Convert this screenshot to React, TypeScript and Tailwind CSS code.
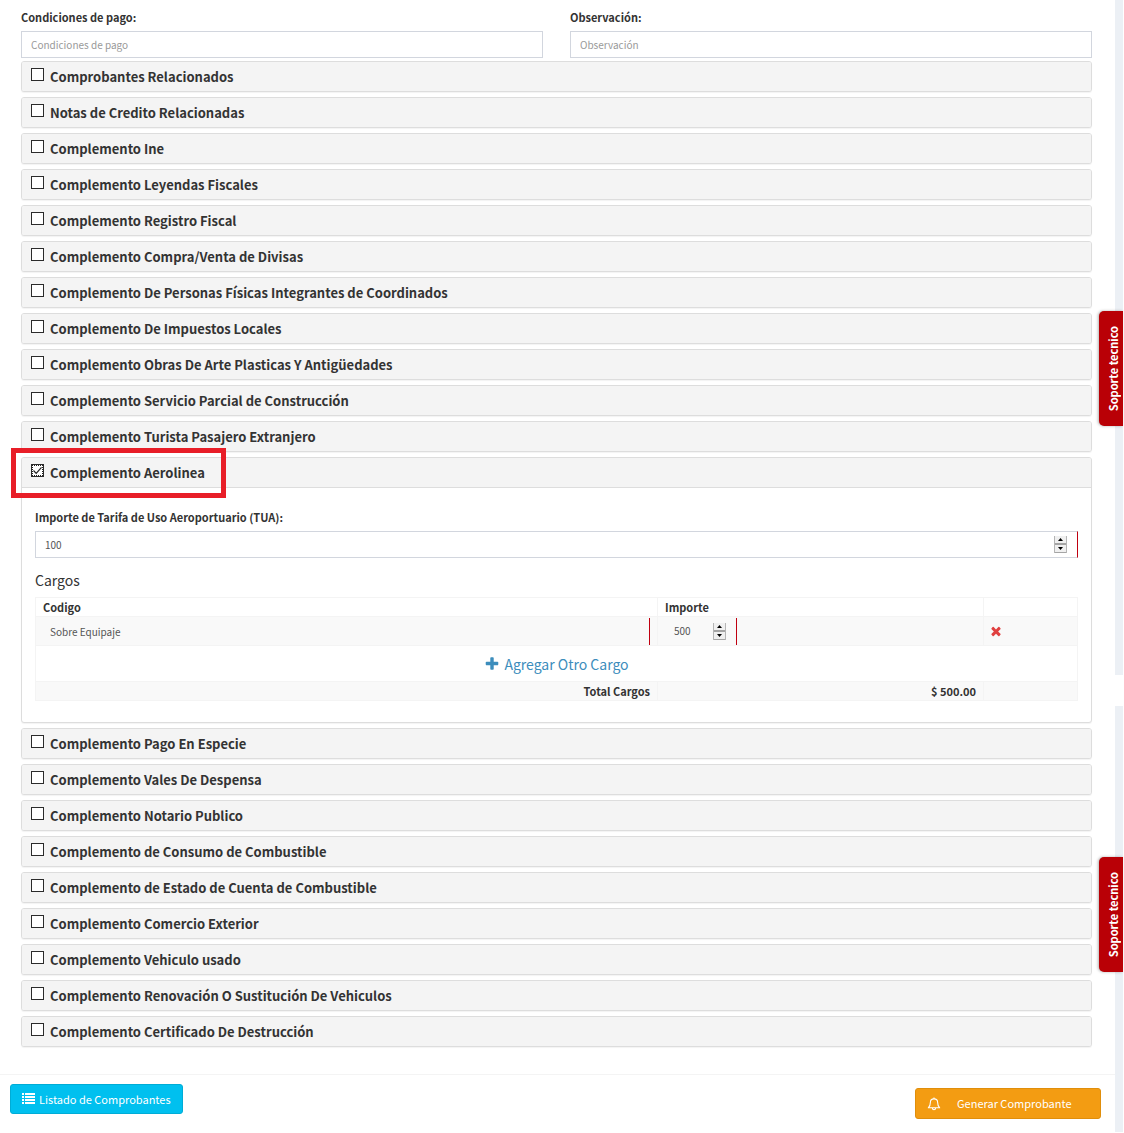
import React, { useState } from 'react';

interface Complemento {
  id: string;
  title: string;
}

const BEFORE: Complemento[] = [
  { id: 'comprobantes', title: 'Comprobantes Relacionados' },
  { id: 'notas', title: 'Notas de Credito Relacionadas' },
  { id: 'ine', title: 'Complemento Ine' },
  { id: 'leyendas', title: 'Complemento Leyendas Fiscales' },
  { id: 'registro', title: 'Complemento Registro Fiscal' },
  { id: 'divisas', title: 'Complemento Compra/Venta de Divisas' },
  { id: 'coordinados', title: 'Complemento De Personas Físicas Integrantes de Coordinados' },
  { id: 'impuestos', title: 'Complemento De Impuestos Locales' },
  { id: 'arte', title: 'Complemento Obras De Arte Plasticas Y Antigüedades' },
  { id: 'construccion', title: 'Complemento Servicio Parcial de Construcción' },
  { id: 'turista', title: 'Complemento Turista Pasajero Extranjero' },
];

const AFTER: Complemento[] = [
  { id: 'especie', title: 'Complemento Pago En Especie' },
  { id: 'vales', title: 'Complemento Vales De Despensa' },
  { id: 'notario', title: 'Complemento Notario Publico' },
  { id: 'consumo', title: 'Complemento de Consumo de Combustible' },
  { id: 'estado', title: 'Complemento de Estado de Cuenta de Combustible' },
  { id: 'comercio', title: 'Complemento Comercio Exterior' },
  { id: 'vehiculo', title: 'Complemento Vehiculo usado' },
  { id: 'renovacion', title: 'Complemento Renovación O Sustitución De Vehiculos' },
  { id: 'destruccion', title: 'Complemento Certificado De Destrucción' },
];

// Icons
const PlusIcon = () => (
  <svg viewBox="0 0 1792 1792" className="h-4 w-4" fill="currentColor">
    <path d="M1600 736v192q0 40-28 68t-68 28h-416v416q0 40-28 68t-68 28h-192q-40 0-68-28t-28-68v-416h-416q-40 0-68-28t-28-68v-192q0-40 28-68t68-28h416v-416q0-40 28-68t68-28h192q40 0 68 28t28 68v416h416q40 0 68 28t28 68z" />
  </svg>
);

const TimesIcon = () => (
  <svg viewBox="0 0 1792 1792" className="h-[14px] w-[14px]" fill="currentColor">
    <path d="M1490 1322q0 40-28 68l-136 136q-28 28-68 28t-68-28l-294-294-294 294q-28 28-68 28t-68-28l-136-136q-28-28-28-68t28-68l294-294-294-294q-28-28-28-68t28-68l136-136q28-28 68-28t68 28l294 294 294-294q28-28 68-28t68 28l136 136q28 28 28 68t-28 68l-294 294 294 294q28 28 28 68z" />
  </svg>
);

const ListIcon = () => (
  <svg viewBox="0 0 13 12" className="h-3 w-[13px]" fill="currentColor">
    <path d="M0 0h2v2H0zM3 0h10v2H3zM0 3h2v2H0zM3 3h10v2H3zM0 6h2v2H0zM3 6h10v2H3zM0 9h2v2H0zM3 9h10v2H3z" />
  </svg>
);

const BellIcon = () => (
  <svg viewBox="0 0 14 14" className="h-[14px] w-[14px]" fill="none" stroke="currentColor" strokeWidth="1.1">
    <path d="M1.3 10.8C3 9.2 3.4 7.6 3.4 5.2c0-2 1.4-3.3 3.6-3.3s3.6 1.3 3.6 3.3c0 2.4.4 4 2.1 5.6z" strokeLinejoin="round" />
    <path d="M7 .6v1.3M5.4 11c0 1 .7 1.7 1.6 1.7s1.6-.7 1.6-1.7" />
  </svg>
);

interface PanelProps {
  id: string;
  title: string;
  checked?: boolean;
  onToggle?: () => void;
  highlight?: boolean;
  children?: React.ReactNode;
}

const Panel: React.FC<PanelProps> = ({ id, title, checked, onToggle, highlight, children }) => (
  <section className="relative rounded-[3px] border border-[#dddddd] bg-white shadow-[0_1px_1px_rgba(0,0,0,0.05)]">
    <div className={`flex h-[29px] items-start rounded-t-[2px] bg-[#f4f4f4] px-[9px] ${children ? 'box-content border-b border-[#dddddd]' : 'rounded-b-[2px]'}`}>
      <span className="relative mt-[6px] block h-[13px] w-[13px]">
        <input
          id={id}
          type="checkbox"
          checked={checked}
          onChange={onToggle}
          className="peer block h-[13px] w-[13px] appearance-none border border-[#2b2b2b] bg-white checked:outline-1 checked:-outline-offset-2 checked:outline-dotted checked:outline-[#222222]"
        />
        <svg viewBox="0 0 13 13" className="pointer-events-none absolute inset-0 hidden h-[13px] w-[13px] peer-checked:block">
          <path d="M2.5 6.5l2.7 2.8 5.3-6" fill="none" stroke="#222" strokeWidth="1.2" />
        </svg>
      </span>
      <label htmlFor={id} className="pl-[6px] text-[13px] leading-[29px] font-bold">{title}</label>
    </div>
    {children}
    {highlight && <div className="pointer-events-none absolute -top-[10px] -left-[11px] h-[50px] w-[215px] border-5 border-[#e81e28]" />}
  </section>
);

const Spinner = ({ onStep }: { onStep: (n: number) => void }) => (
  <span className="flex h-[17px] w-[13px] shrink-0 flex-col border-x border-[#b5b5b5] bg-[#f0f0f0]">
    <button type="button" aria-label="Aumentar" onClick={() => onStep(1)} className="flex h-2 w-full items-center justify-center border-b border-[#a5a5a5]">
      <svg viewBox="0 0 5 3" className="h-[3px] w-[5px]"><path d="M0 3L2.5 0 5 3z" /></svg>
    </button>
    <button type="button" aria-label="Disminuir" onClick={() => onStep(-1)} className="flex h-[9px] w-full items-center justify-center border-y border-[#a5a5a5]">
      <svg viewBox="0 0 5 3" className="h-[3px] w-[5px]"><path d="M0 0L2.5 3 5 0z" /></svg>
    </button>
  </span>
);

const SupportTab = ({ className }: { className: string }) => (
  <button type="button" className={`absolute right-px flex h-[115px] w-6 items-center justify-center rounded-l-[5px] bg-[#b90006] pl-1 text-white shadow-[-1px_0_3px_rgba(0,0,0,0.3)] ${className}`}>
    <span className="rotate-180 text-[11px] leading-[16px] font-bold [writing-mode:vertical-rl]">Soporte tecnico</span>
  </button>
);

const fieldLabel = 'mb-1 block text-[11px] leading-[19px] font-bold';
const inputBox = 'block h-[27px] w-full border border-[#d2d6de] bg-white px-[9px] text-[10px] leading-[25px] text-[#555555] placeholder:text-[#999999] outline-none';
const numberReset = 'min-w-0 bg-transparent text-[10px] text-[#555555] outline-none [appearance:textfield]';

export default function App() {
  const [selected, setSelected] = useState<Record<string, boolean>>({ aerolinea: true });
  const [tua, setTua] = useState(100);
  const [importe, setImporte] = useState(500);
  const [codigo, setCodigo] = useState('Sobre Equipaje');

  const toggle = (id: string) => setSelected(prev => ({ ...prev, [id]: !prev[id] }));

  const renderPanel = (c: Complemento) => (
    <Panel key={c.id} id={c.id} title={c.title} checked={!!selected[c.id]} onToggle={() => toggle(c.id)} />
  );

  return (
    <div className="relative flex min-h-screen bg-white pr-px font-['Noto_Sans_CJK_SC','Noto_Sans',sans-serif] text-[#333333]">
      <main className="min-w-0 flex-1">
        <div className="pr-[23px] pl-[21px]">
          <div className="grid grid-cols-2 gap-[27px] pt-2">
            <div>
              <label htmlFor="condiciones" className={fieldLabel}>Condiciones de pago:</label>
              <input id="condiciones" type="text" placeholder="Condiciones de pago" className={inputBox} />
            </div>
            <div>
              <label htmlFor="observacion" className={fieldLabel}>Observación:</label>
              <input id="observacion" type="text" placeholder="Observación" className={inputBox} />
            </div>
          </div>

          <div className="mt-[3px] flex flex-col gap-[5px]">
            {BEFORE.map(renderPanel)}

            <Panel id="aerolinea" title="Complemento Aerolinea" checked={!!selected.aerolinea} onToggle={() => toggle('aerolinea')} highlight>
              <div className="px-[13px] pt-5 pb-[21px]">
                <label htmlFor="tua" className={fieldLabel}>Importe de Tarifa de Uso Aeroportuario (TUA):</label>
                <div className="flex h-[27px] items-center border-y border-r border-l border-y-[#d2d6de] border-r-[#c00010] border-l-[#d2d6de] pr-[10px] pl-[9px]">
                  <input id="tua" type="number" value={tua} onChange={e => setTua(Number(e.target.value))} className={`flex-1 ${numberReset}`} />
                  <Spinner onStep={n => setTua(tua + n)} />
                </div>

                <h4 className="mt-3 mb-[7px] text-[14px] leading-5">Cargos</h4>

                <table className="w-full table-fixed border-collapse border border-[#f4f4f4] text-[11px] leading-[18px]">
                  <colgroup>
                    <col />
                    <col className="w-[326px]" />
                    <col className="w-[94px]" />
                  </colgroup>
                  <thead>
                    <tr className="h-[19px] text-left">
                      <th className="border border-[#f4f4f4] px-[7px]">Codigo</th>
                      <th className="border border-[#f4f4f4] px-[7px]">Importe</th>
                      <th className="border border-[#f4f4f4]"></th>
                    </tr>
                  </thead>
                  <tbody>
                    <tr className="h-[29px] bg-[#f9f9f9]">
                      <td className="border border-[#f4f4f4] px-[7px]">
                        <input type="text" aria-label="Codigo" value={codigo} onChange={e => setCodigo(e.target.value)} className="block h-[27px] w-full border-r border-r-[#c00010] bg-transparent px-[7px] text-[10px] text-[#555555] outline-none" />
                      </td>
                      <td className="border border-[#f4f4f4] px-[7px]">
                        <div className="flex h-[27px] w-[72px] items-center border-r border-r-[#c00010] pr-[10px] pl-[9px]">
                          <input type="number" aria-label="Importe" value={importe} onChange={e => setImporte(Number(e.target.value))} className={`flex-1 ${numberReset}`} />
                          <Spinner onStep={n => setImporte(importe + n)} />
                        </div>
                      </td>
                      <td className="border border-[#f4f4f4] px-[5px]">
                        <button type="button" aria-label="Eliminar cargo" className="block text-[#e04040]"><TimesIcon /></button>
                      </td>
                    </tr>
                    <tr className="h-9">
                      <td colSpan={3} className="border border-[#f4f4f4]">
                        <button type="button" className="mx-auto flex items-center gap-1 text-[14px] leading-5 text-[#3c8dbc]">
                          <PlusIcon /> Agregar Otro Cargo
                        </button>
                      </td>
                    </tr>
                    <tr className="h-[19px] bg-[#f9f9f9] text-right font-bold">
                      <td className="border border-[#f4f4f4] px-[7px]">Total Cargos</td>
                      <td className="border border-[#f4f4f4] px-[7px]">$ {importe.toFixed(2)}</td>
                      <td className="border border-[#f4f4f4]"></td>
                    </tr>
                  </tbody>
                </table>
              </div>
            </Panel>

            {AFTER.map(renderPanel)}
          </div>
        </div>

        <footer className="mt-[27px] flex items-start justify-between border-t border-[#f4f4f4] pt-[9px] pr-[14px] pl-[10px]">
          <button type="button" className="flex h-[30px] items-center gap-1 rounded-[3px] border border-[#00acd6] bg-[#00c0ef] px-[11px] text-[11px] text-white">
            <ListIcon /> Listado de Comprobantes
          </button>
          <button type="button" className="mt-1 flex h-[31px] w-[186px] items-center gap-4 rounded-[3px] border border-[#e08e0b] bg-[#f39c12] px-[11px] text-[11px] text-white">
            <BellIcon /> Generar Comprobante
          </button>
        </footer>
      </main>

      <aside className="flex w-2 shrink-0 flex-col gap-[31px] pb-px">
        <div className="h-[675px] bg-[#ecf0f5]" />
        <div className="flex-1 bg-[#ecf0f5]" />
      </aside>

      <SupportTab className="top-[311px]" />
      <SupportTab className="top-[857px]" />
    </div>
  );
}
